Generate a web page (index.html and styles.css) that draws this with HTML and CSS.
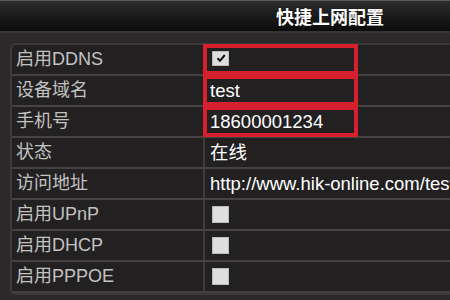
FILE: index.html
```html
<!DOCTYPE html>
<html lang="zh-CN">
<head>
<meta charset="utf-8">
<title>快捷上网配置</title>
<link rel="stylesheet" href="styles.css">
</head>
<body>
<div class="header"><span class="title">快捷上网配置</span></div>
<div class="panel">
  <div class="row">
    <div class="label">启用DDNS</div>
    <div class="value"><span class="check checked"><svg viewBox="0 0 10 10" width="10" height="10"><path d="M1.5 5.2 L4 7.8 L8.8 2" fill="none" stroke="#111" stroke-width="2"/></svg></span><span class="mark"></span></div>
  </div>
  <div class="row">
    <div class="label">设备域名</div>
    <div class="value"><span class="text">test</span><span class="mark"></span></div>
  </div>
  <div class="row">
    <div class="label">手机号</div>
    <div class="value"><span class="text">18600001234</span><span class="mark"></span></div>
  </div>
  <div class="row">
    <div class="label">状态</div>
    <div class="value"><span class="text">在线</span></div>
  </div>
  <div class="row">
    <div class="label">访问地址</div>
    <div class="value"><span class="text">http://www.hik-online.com/test</span></div>
  </div>
  <div class="row">
    <div class="label">启用UPnP</div>
    <div class="value"><span class="check"></span></div>
  </div>
  <div class="row">
    <div class="label">启用DHCP</div>
    <div class="value"><span class="check"></span></div>
  </div>
  <div class="row">
    <div class="label">启用PPPOE</div>
    <div class="value"><span class="check"></span></div>
  </div>
</div>
</body>
</html>
```

FILE: styles.css
```css
html, body {
  margin: 0;
  padding: 0;
  background: #2b292a;
  width: 450px;
  height: 300px;
  overflow: hidden;
  font-family: "Liberation Sans", "Noto Sans CJK SC", sans-serif;
}

.header {
  height: 30px;
  border-top: 1px solid #5a5a5a;
  border-bottom: 2px solid #363435;
  background: linear-gradient(#2e2e2e, #1a1a1a 50%, #0c0c0c);
  display: flex;
  align-items: center;
  justify-content: center;
  padding-left: 210px;
}

.title {
  color: #ffffff;
  font-size: 18px;
  font-weight: bold;
  text-shadow: 0 0 1px #000;
}

.panel {
  margin: 10px 0 0 10px;
  width: 460px;
  border: 2px solid #3b393a;
  border-right: none;
  border-radius: 6px 0 0 6px;
  background: #222021;
}

.row {
  display: flex;
  height: 29px;
  border-bottom: 2px solid #444243;
}

.row:last-child {
  border-bottom-color: #403e3f;
}

.label {
  width: 187px;
  padding-left: 4px;
  border-right: 2px solid #3e3c3d;
  color: #c2c2c2;
  font-size: 18px;
  line-height: 29px;
  white-space: nowrap;
}

.value {
  position: relative;
  flex: 1;
  display: flex;
  align-items: center;
  padding-left: 5px;
  color: #ffffff;
  font-size: 18.5px;
  white-space: nowrap;
}

.text {
  line-height: 29px;
}

.check {
  display: inline-flex;
  align-items: center;
  justify-content: center;
  width: 17px;
  height: 17px;
  margin-left: 2px;
  background: #dedede;
  border: 1px solid #bcbcbc;
  box-sizing: border-box;
}

.check.checked {
  height: 15px;
  margin-top: -3px;
}

.mark {
  position: absolute;
  left: -2px;
  top: -1px;
  width: 155px;
  height: 31px;
  border: 4px solid #d6202e;
  box-sizing: border-box;
}
```
